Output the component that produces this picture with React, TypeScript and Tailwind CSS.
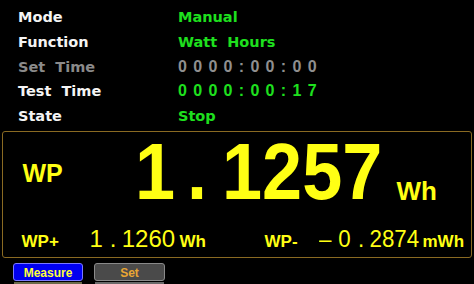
import React from "react";

const rows: { label: string; value: string; labelCls: string; valueCls: string; time?: boolean }[] = [
  { label: "Mode", value: "Manual", labelCls: "text-[#f4f4f4]", valueCls: "text-[#1ee01e]" },
  { label: "Function", value: "Watt  Hours", labelCls: "text-[#f4f4f4]", valueCls: "text-[#1ee01e]" },
  { label: "Set  Time", value: "0000:00:00", labelCls: "text-[#8a8a8a]", valueCls: "text-[#8f8f8f]", time: true },
  { label: "Test  Time", value: "0000:00:17", labelCls: "text-[#f4f4f4]", valueCls: "text-[#1ee01e]", time: true },
  { label: "State", value: "Stop", labelCls: "text-[#f4f4f4]", valueCls: "text-[#1ee01e]" },
];

export default function App() {
  return (
    <div className="w-[474px] h-[284px] bg-black overflow-hidden font-['Liberation_Sans',Arial,sans-serif]">
      <div className="pl-[18px] pt-[5px] font-['DejaVu_Sans',sans-serif] font-bold text-[14.5px] leading-[24.75px]">
        {rows.map((r) => (
          <div key={r.label} className="flex">
            <div className={`w-[160px] whitespace-pre ${r.labelCls}`}>{r.label}</div>
            {r.time ? (
              <div className={`font-['Liberation_Sans',Arial,sans-serif] text-[16px] tracking-[6.3px] ${r.valueCls}`}>
                {r.value}
              </div>
            ) : (
              <div className={`whitespace-pre ${r.valueCls}`}>{r.value}</div>
            )}
          </div>
        ))}
      </div>

      <div className="mx-[2px] mt-[2px] h-[127px] border-[1.5px] border-[#8a6a22] rounded-[3px] text-[#ffff14] font-bold">
        <div className="flex items-start h-[80px]">
          <div className="ml-[19.5px] mt-[29px] w-[112px] text-[25px] leading-[25px]">WP</div>
          <div className="w-[262px] text-[80px] leading-[80px] whitespace-nowrap">
            <span className="inline-block origin-left scale-x-[0.9]">
              1<span className="ml-[13.3px] mr-[16.7px]">.</span>1257
            </span>
          </div>
          <div className="mt-[46.5px] text-[26px] leading-[26px]">Wh</div>
        </div>
        <div className="flex items-baseline mt-[13.8px]">
          <div className="ml-[18.5px] w-[68px] text-[17px] leading-[17px]">WP+</div>
          <div className="w-[90px] text-[24px] leading-[25px] font-normal whitespace-nowrap">
            1<span className="ml-[7px]">.</span>
            <span className="ml-[5.2px]">1260</span>
          </div>
          <div className="w-[85px] text-[17px] leading-[17px]">Wh</div>
          <div className="w-[54px] text-[17px] leading-[17px]">WP-</div>
          <div className="w-[104px] text-[24px] leading-[25px] font-normal whitespace-nowrap">
            <span className="inline-block origin-left scale-x-[0.93]">
              –<span className="ml-[7.3px]">0</span>
              <span className="ml-[8px]">.</span>
              <span className="ml-[5.6px]">2874</span>
            </span>
          </div>
          <div className="text-[17px] leading-[17px]">mWh</div>
        </div>
      </div>

      <div className="flex mt-[5px]">
        <div className="ml-[13px] w-[70px] h-[18px] rounded-[3px] border border-[#7a7aff] bg-[#0000f0] text-[#ffff3c] text-[12px] leading-[18px] font-bold text-center">
          Measure
        </div>
        <div className="ml-[11px] w-[71px] h-[18px] rounded-[3px] border border-[#8a8a8a] bg-[#4a4a4a] text-[#e8a634] text-[12px] leading-[18px] font-bold text-center">
          Set
        </div>
      </div>
      <div className="flex mt-[1px]">
        <div className="ml-[14px] w-[68px] h-[2px] bg-[#6b6b4a]" />
        <div className="ml-[13px] w-[69px] h-[2px] bg-[#6a6a6a]" />
      </div>
    </div>
  );
}
